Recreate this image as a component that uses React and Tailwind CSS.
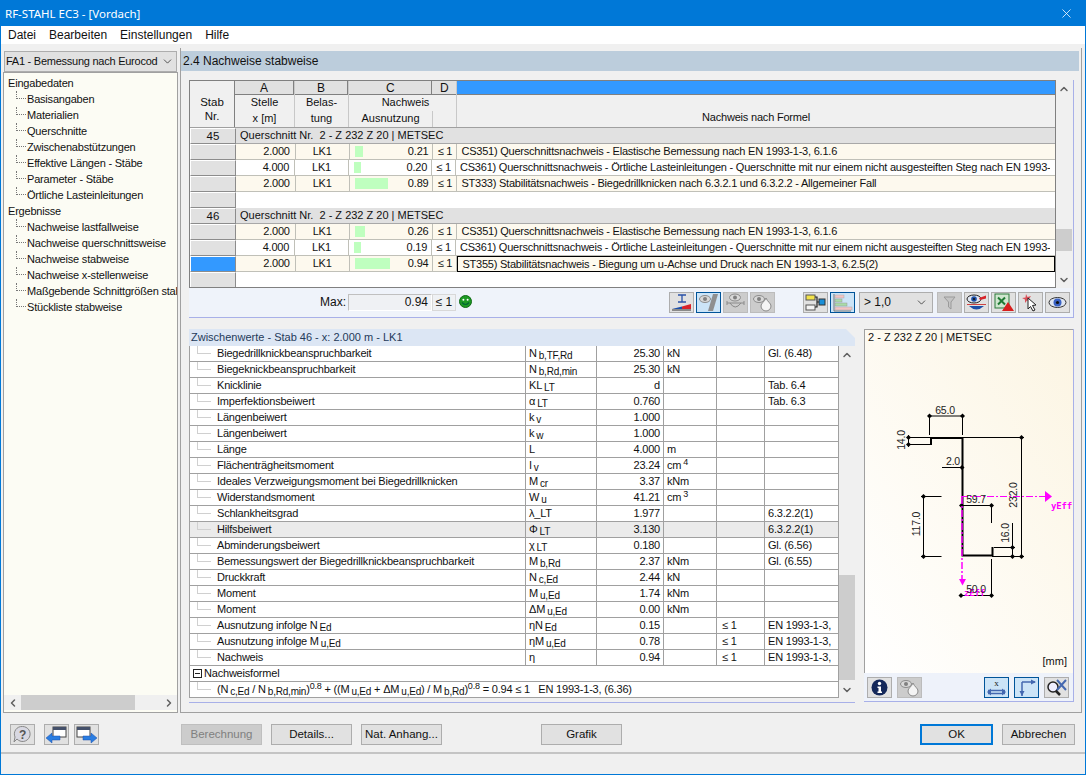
import React from "react";
import { X, ChevronDown, ChevronUp, ChevronLeft, ChevronRight } from "lucide-react";

const treeInput = ["Basisangaben", "Materialien", "Querschnitte", "Zwischenabstützungen", "Effektive Längen - Stäbe", "Parameter - Stäbe", "Örtliche Lasteinleitungen"];
const treeResult = ["Nachweise lastfallweise", "Nachweise querschnittsweise", "Nachweise stabweise", "Nachweise x-stellenweise", "Maßgebende Schnittgrößen stabweise", "Stückliste stabweise"];

const cs351 = "CS351) Querschnittsnachweis - Elastische Bemessung nach EN 1993-1-3, 6.1.6";
const cs361 = "CS361) Querschnittsnachweis - Örtliche Lasteinleitungen - Querschnitte mit nur einem nicht ausgesteiften Steg nach EN 1993-1-3, 6.1.7";

const groups = [
  {
    nr: "45",
    rows: [
      { x: "2.000", val: 0.21, text: cs351 },
      { x: "4.000", val: 0.2, text: cs361 },
      { x: "2.000", val: 0.89, text: "ST333) Stabilitätsnachweis - Biegedrillknicken nach 6.3.2.1 und 6.3.2.2 - Allgemeiner Fall" },
    ],
  },
  {
    nr: "46",
    rows: [
      { x: "2.000", val: 0.26, text: cs351 },
      { x: "4.000", val: 0.19, text: cs361 },
      { x: "2.000", val: 0.94, text: "ST355) Stabilitätsnachweis - Biegung um u-Achse und Druck nach EN 1993-1-3, 6.2.5(2)", active: true },
    ],
  },
];

const S = ({ b, s, p }) => (
  <span>
    {b}
    {s && <sub className="ml-[2px] text-[10px] [bottom:-1.5px]">{s}</sub>}
    {p && <sup className="ml-[2px] text-[9px]">{p}</sup>}
  </span>
);

const values = [
  ["Biegedrillknickbeanspruchbarkeit", <S b="N" s="b,TF,Rd" />, "25.30", "kN", "", "Gl. (6.48)"],
  ["Biegeknickbeanspruchbarkeit", <S b="N" s="b,Rd,min" />, "25.30", "kN", "", ""],
  ["Knicklinie", <S b="KL" s="LT" />, "d", "", "", "Tab. 6.4"],
  ["Imperfektionsbeiwert", <S b="α" s="LT" />, "0.760", "", "", "Tab. 6.3"],
  ["Längenbeiwert", <S b="k" s="v" />, "1.000", "", "", ""],
  ["Längenbeiwert", <S b="k" s="w" />, "1.000", "", "", ""],
  ["Länge", "L", "4.000", "m", "", ""],
  ["Flächenträgheitsmoment", <S b="I" s="v" />, "23.24", <S b="cm" p="4" />, "", ""],
  ["Ideales Verzweigungsmoment bei Biegedrillknicken", <S b="M" s="cr" />, "3.37", "kNm", "", ""],
  ["Widerstandsmoment", <S b="W" s="u" />, "41.21", <S b="cm" p="3" />, "", ""],
  ["Schlankheitsgrad", <S b="λ_LT" />, "1.977", "", "", "6.3.2.2(1)"],
  ["Hilfsbeiwert", <S b="Φ" s="LT" />, "3.130", "", "", "6.3.2.2(1)"],
  ["Abminderungsbeiwert", <S b="χ" s="LT" />, "0.180", "", "", "Gl. (6.56)"],
  ["Bemessungswert der Biegedrillknickbeanspruchbarkeit", <S b="M" s="b,Rd" />, "2.37", "kNm", "", "Gl. (6.55)"],
  ["Druckkraft", <S b="N" s="c,Ed" />, "2.44", "kN", "", ""],
  ["Moment", <S b="M" s="u,Ed" />, "1.74", "kNm", "", ""],
  ["Moment", <S b="ΔM" s="u,Ed" />, "0.00", "kNm", "", ""],
  [<S b="Ausnutzung infolge N" s="Ed" />, <S b="ηN" s="Ed" />, "0.15", "", "≤ 1", "EN 1993-1-3,"],
  [<S b="Ausnutzung infolge M" s="u,Ed" />, <S b="ηM" s="u,Ed" />, "0.78", "", "≤ 1", "EN 1993-1-3,"],
  ["Nachweis", "η", "0.94", "", "≤ 1", "EN 1993-1-3,"],
];

function IconBtn({ mode, children }) {
  const cls =
    mode === "on"
      ? "bg-[#cce4f7] border-[#005499]"
      : mode === "off"
      ? "bg-[#cccccc] border-[#bcbcbc]"
      : "bg-[#e1e1e1] border-[#adadad]";
  return (
    <div className={`w-[25px] h-[21px] border flex items-center justify-center shrink-0 ${cls}`}>
      <svg width="23" height="19" viewBox="0 0 23 19">{children}</svg>
    </div>
  );
}

const GreyEye = ({ x = 8, y = 6 }) => (
  <g>
    <ellipse cx={x} cy={y} rx="5.5" ry="3.5" fill="#d8d8d8" stroke="#8c8c8c" />
    <circle cx={x} cy={y} r="2" fill="#808080" />
  </g>
);
const Drop = ({ x = 14 }) => (
  <path d={`M${x} 5 C${x + 1.5} 9 ${x + 5} 10 ${x + 5} 13 A5 5 0 0 1 ${x - 5} 13 C${x - 5} 10 ${x - 1.5} 9 ${x} 5Z`} fill="#f4f4f4" stroke="#8a8a8a" />
);

const ScrollV = ({ className, thumb }) => (
  <div className={`flex flex-col items-center bg-[#f0f0f0] ${className}`}>
    <ChevronUp size={12} strokeWidth={3} className="text-[#606060] mt-[3px] shrink-0" />
    <div className="flex-1 w-full">{thumb}</div>
    <ChevronDown size={12} strokeWidth={3} className="text-[#606060] mb-[2px] shrink-0" />
  </div>
);

const Dot = ({ x, y }) => <path d={`M${x - 2.5} ${y} L${x} ${y - 2.5} L${x + 2.5} ${y} L${x} ${y + 2.5}Z`} fill="#000" />;
const DimText = ({ x, y, rot, children }) => (
  <text x={x} y={y} fontSize="10.5" fill="#222" textAnchor="middle" transform={rot ? `rotate(-90 ${x} ${y})` : undefined} fontFamily="'Liberation Sans', sans-serif">
    {children}
  </text>
);

function Section() {
  const lines = [
    [929.5, 416, 962.5, 416], [929.5, 416, 929.5, 435], [962.5, 416, 962.5, 435],
    [907, 437.5, 930, 437.5], [907, 444.5, 930, 444.5], [908.5, 435, 908.5, 447],
    [942, 467.5, 962, 467.5],
    [1021.5, 437.5, 1021.5, 557], [962, 437.5, 1024, 437.5], [992, 556.5, 1024, 556.5],
    [923.5, 496.5, 923.5, 556.5], [921, 496.5, 941.5, 496.5], [921, 556.5, 941.5, 556.5],
    [961, 505.5, 992, 505.5], [991.5, 505, 991.5, 523],
    [1012.5, 523, 1012.5, 557], [994, 547.5, 1015, 547.5],
    [961, 595.5, 992, 595.5], [991.5, 559, 991.5, 596],
  ];
  const dots = [
    [929.5, 416], [962.5, 416], [908.5, 437.5], [908.5, 444.5], [962, 467.5], [1021.5, 437.5], [1021.5, 556.5],
    [923.5, 496.5], [923.5, 556.5], [961.5, 505.5], [991.5, 505.5], [1012.5, 547.5], [1012.5, 556.5], [961, 595.5], [991.5, 595.5],
  ];
  return (
    <svg className="block" width="208" height="310" viewBox="865 347 208 310">
      {lines.map((l, i) => (
        <line key={i} x1={l[0]} y1={l[1]} x2={l[2]} y2={l[3]} stroke="#000" strokeWidth="1" />
      ))}
      {dots.map((d, i) => (
        <Dot key={i} x={d[0]} y={d[1]} />
      ))}
      <path d="M931 445 V438 H962.5 V555.5 H992.5 V547" fill="none" stroke="#000" strokeWidth="2" />
      <line x1="961" y1="496.5" x2="1046" y2="496.5" stroke="#ff00ff" strokeWidth="1" strokeDasharray="7 2 2 2" />
      <path d="M1045 491 L1052 496.5 L1045 502Z" fill="#ff00ff" />
      <line x1="962" y1="497" x2="962" y2="580" stroke="#ff00ff" strokeWidth="1.5" strokeDasharray="7 2 2 2" />
      <path d="M959 579 H966 L962.5 585.5Z" fill="#ff00ff" />
      <DimText x={945} y={414}>65.0</DimText>
      <DimText x={905} y={440} rot>14.0</DimText>
      <DimText x={953} y={465}>2.0</DimText>
      <DimText x={1017} y={495} rot>232.0</DimText>
      <DimText x={920} y={524} rot>117.0</DimText>
      <DimText x={976} y={503}>59.7</DimText>
      <DimText x={1009} y={533} rot>16.0</DimText>
      <text x="964" y="596" fontSize="9" fontWeight="bold" fill="#ff00ff" fontFamily="'DejaVu Sans Mono', monospace">zEff</text>
      <DimText x={976} y={593}>50.0</DimText>
      <text x="1051" y="509" fontSize="9" fontWeight="bold" fill="#ff00ff" fontFamily="'DejaVu Sans Mono', monospace">yEff</text>
    </svg>
  );
}

const Btn = ({ children, className = "" }) => (
  <div className={`h-[21px] w-[81px] border border-[#adadad] bg-[#e1e1e1] flex items-center justify-center text-[11.5px] tracking-normal whitespace-nowrap text-[#111] shrink-0 ${className}`}>
    {children}
  </div>
);

function ResultRow({ row, odd }) {
  const bg = odd ? "bg-[#fdf9ee]" : "bg-white";
  return (
    <div className="flex h-4">
      <div className={`w-[46px] border border-[#8c8c8c] border-t-white border-l-white ${row.active ? "bg-[#3399ff]" : "bg-[#e1e1e1]"}`} />
      <div className={`w-[60px] ${bg} border-b border-r border-[#c0c0b8] text-right pr-[5px]`}>{row.x}</div>
      <div className={`w-[54px] ${bg} border-b border-r border-[#c0c0b8] text-center`}>LK1</div>
      <div className={`w-[84px] ${bg} border-b border-r border-[#c0c0b8] flex items-center justify-between pl-[5px] pr-[4px]`}>
        <div className="h-[11px] bg-[#bfffbf]" style={{ width: `${Math.round(row.val * 37)}px` }} />
        <span>{row.val.toFixed(2)}</span>
      </div>
      <div className={`w-[24px] ${bg} border-b border-r border-[#c0c0b8] text-center`}>≤ 1</div>
      <div className={`w-[599px] ${bg} pl-[4px] pr-[5px] ${row.active ? "border border-black pl-[3px] leading-[14px]" : "border-b border-[#c0c0b8]"}`}>
        <div className="overflow-hidden whitespace-nowrap tracking-[-0.22px]">{row.text}</div>
      </div>
    </div>
  );
}

export default function App() {
  return (
    <div className="w-[1086px] h-[775px] flex flex-col bg-[#f0f0f0] border border-[#0078d7] overflow-hidden text-[11px] tracking-[-0.2px] leading-[15px] text-[#111] font-['Liberation_Sans',Arial,sans-serif]">
      {/* title bar */}
      <div className="h-[25px] shrink-0 bg-[#0078d7] text-white text-[11.5px] tracking-normal flex items-center justify-between pl-[4px] pr-[11px] font-['Noto_Sans',sans-serif]">
        <span>RF-STAHL EC3 - [Vordach]</span>
        <X size={15} strokeWidth={1.25} />
      </div>
      <div className="h-[18px] shrink-0 bg-white flex items-center pl-[7px] gap-[13px] text-[12px] tracking-normal">
        <span>Datei</span>
        <span>Bearbeiten</span>
        <span>Einstellungen</span>
        <span>Hilfe</span>
      </div>

      {/* main */}
      <div className="h-[669px] shrink-0 flex pt-[7px] pl-[2px]">
        {/* left navigator */}
        <div className="w-[175px] shrink-0 flex flex-col">
          <div className="h-[21px] ml-[1px] w-[173px] bg-[#e1e1e1] border border-[#adadad] flex items-center justify-between pl-[1px] pr-[2px] text-[11px] tracking-[-0.25px] overflow-hidden">
            <span className="whitespace-nowrap">FA1 - Bemessung nach Eurocod</span>
            <ChevronDown size={13} strokeWidth={1.25} className="shrink-0" />
          </div>
          <div className="flex-1 flex flex-col bg-[#fcfcf4] border border-[#a0a0a0] overflow-hidden">
            <div className="flex-1 pt-[2px] pl-[4px] leading-4">
              <div className="h-4">Eingabedaten</div>
              <TreeList items={treeInput} />
              <div className="h-4">Ergebnisse</div>
              <TreeList items={treeResult} />
            </div>
            <div className="h-[15px] mb-[2px] flex items-center justify-between bg-[#f0f0f0]">
              <ChevronLeft size={12} strokeWidth={3} className="text-[#606060] ml-[3px] shrink-0" />
              <div className="flex-1 h-full ml-[2px]">
                <div className="h-full w-[114px] bg-[#cdcdcd]" />
              </div>
              <ChevronRight size={12} strokeWidth={3} className="text-[#606060] mr-[2px] shrink-0" />
            </div>
          </div>
        </div>

        {/* right content */}
        <div className="w-[902px] shrink-0 ml-[2px] -mt-[3px] flex flex-col border border-t-0 border-[#a0a0a0] pt-[3px]">
          <div className="h-[20px] shrink-0 bg-[#bccddc] mr-[2px] pl-[2px] flex items-center text-[12px] tracking-normal">2.4 Nachweise stabweise</div>

          {/* upper table */}
          <div className="mt-[9px] ml-[8px] flex w-[885px] h-[208px] shrink-0 border-r border-[#a8b0e8]">
            <div className="w-[867px] border border-[#808080] bg-white overflow-hidden">
              <div className="flex h-[47px] bg-[#f0f0f0] border-b border-[#a0a0a0]">
                <div className="w-[45px] text-center pt-[14px] text-[11.5px] tracking-normal leading-[14px] border-r border-[#808080]">
                  Stab<br />Nr.
                </div>
                <HeadCol w="w-[60px]" l="A" a="Stelle" b="x [m]" />
                <HeadCol w="w-[54px]" l="B" a="Belas-" b="tung" />
                <div className="w-[108px] flex flex-col border-r border-[#c8c8c8]">
                  <div className="flex h-[14px]">
                    <div className="w-[84px] bg-[#e1e1e1] border-b border-r border-[#808080] text-center leading-[14px] text-[12px]">C</div>
                    <div className="w-[24px] bg-[#e1e1e1] border-b border-[#808080] text-center leading-[14px] text-[12px]">D</div>
                  </div>
                  <div className="text-center h-4 pl-[6px] leading-[15px] tracking-normal">Nachweis</div>
                  <div className="flex flex-1">
                    <div className="w-[84px] text-center border-r border-[#c8c8c8] leading-[15px] tracking-normal">Ausnutzung</div>
                  </div>
                </div>
                <div className="flex-1 flex flex-col">
                  <div className="h-[14px] bg-[#3399ff] border-b border-[#808080]" />
                  <div className="flex-1 flex items-end justify-center pb-[2px]">Nachweis nach Formel</div>
                </div>
              </div>
              {groups.map((g) => (
                <div key={g.nr}>
                  <div className="flex h-4">
                    <div className="w-[46px] bg-[#e1e1e1] border border-[#8c8c8c] border-t-white border-l-white text-center text-[11.5px] tracking-normal">{g.nr}</div>
                    <div className="flex-1 bg-[#e1e1e1] border-b border-[#a8a8a8] pl-[4px] tracking-normal">Querschnitt Nr.&nbsp; 2 - Z 232 Z 20 | METSEC</div>
                  </div>
                  {g.rows.map((r, j) => (
                    <ResultRow key={j} row={r} odd={j % 2 === 0} />
                  ))}
                  <div className="flex h-4">
                    <div className="w-[46px] bg-[#e1e1e1] border border-[#8c8c8c] border-t-white border-l-white" />
                  </div>
                </div>
              ))}
            </div>
            <ScrollV className="w-[16px]" thumb={<div className="h-[22px] mt-[134px] bg-[#cdcdcd]" />} />
          </div>

          {/* toolbar */}
          <div className="ml-[8px] w-[885px] h-[30px] shrink-0 bg-[#eff3fa] border-r border-b border-[#a8b0e8] flex items-center">
            <span className="ml-[131px] w-[28px] text-[12px] tracking-normal">Max:</span>
            <div className="w-[84px] h-[17px] bg-[#eff1f4] border border-[#c0c0c0] border-b-white border-r-white text-right pr-[3px] text-[12px] tracking-normal leading-[15px]">0.94</div>
            <div className="w-[24px] h-[17px] bg-[#eff1f4] border border-[#d8d8d8] text-center text-[12px] tracking-normal leading-[15px]">≤ 1</div>
            <svg className="ml-[3px] mb-[2px]" width="13" height="13" viewBox="0 0 13 13">
              <circle cx="6.5" cy="6.5" r="6" fill="#1d9a24" stroke="#0f6a14" />
              <circle cx="4.4" cy="4.8" r="1" fill="#fff" />
              <circle cx="8.6" cy="4.8" r="1" fill="#fff" />
              <path d="M3 7.5 Q6.5 11.5 10 7.5" fill="none" stroke="#063" strokeWidth="1.2" />
            </svg>
            <div className="ml-[197px] flex gap-[2px]">
              <IconBtn>
                <path d="M8 2H16M12 2V9M8 9H16" stroke="#2a52a8" strokeWidth="1.3" fill="none" />
                <path d="M2 16 L12 13.5 V16Z" fill="#1c4fa8" />
                <path d="M12 13.5 L21 11 V16 H12Z" fill="#d8232a" />
                <path d="M2 17 H21" stroke="#333" />
              </IconBtn>
              <IconBtn mode="on">
                <GreyEye />
                <path d="M11 18 L16 1 H21 L16 18Z" fill="#8f8f8f" />
              </IconBtn>
              <IconBtn mode="off">
                <GreyEye x={11} y={4.5} />
                <path d="M3 10 H20 M3 8 V12 M20 8 V12 M6 10 Q11 18 17 10" fill="none" stroke="#8a8a8a" />
              </IconBtn>
              <IconBtn mode="off">
                <GreyEye />
                <Drop x={15} />
              </IconBtn>
            </div>
            <div className="ml-[28px] flex gap-[2px]">
              <IconBtn>
                <rect x="2" y="2" width="9" height="5" fill="#f2e24a" stroke="#555" />
                <rect x="2" y="12" width="9" height="5" fill="#f4f4f4" stroke="#555" />
                <rect x="15" y="6" width="6" height="6" fill="#1a8fd8" stroke="#333" />
                <path d="M11 4 H13 V14 H11 M13 9 H15" fill="none" stroke="#222" strokeWidth="1.2" />
              </IconBtn>
              <IconBtn mode="on">
                <path d="M3 1 V18 H20" stroke="#777" fill="none" />
                <rect x="4" y="2" width="9" height="3" fill="#f2c4c4" stroke="#aaa" strokeWidth="0.5" />
                <rect x="4" y="6" width="7" height="3" fill="#a8dca8" stroke="#999" strokeWidth="0.5" />
                <rect x="4" y="10" width="12" height="3" fill="#a8dca8" stroke="#999" strokeWidth="0.5" />
                <rect x="4" y="14" width="17" height="3" fill="#f2c4c4" stroke="#aaa" strokeWidth="0.5" />
              </IconBtn>
            </div>
            <div className="ml-[4px] w-[74px] h-[21px] border border-[#adadad] bg-[#e1e1e1] flex items-center justify-between pl-[4px] pr-[4px] text-[12px] tracking-normal">
              <span>&gt; 1,0</span>
              <ChevronDown size={13} strokeWidth={1.25} />
            </div>
            <div className="ml-[4px] flex gap-[2px]">
              <IconBtn mode="off">
                <path d="M6 4 H17 L13 9 V16 L10.5 14 V9Z" fill="#c4c4c4" stroke="#9a9a9a" />
              </IconBtn>
              <IconBtn>
                <ellipse cx="9" cy="6" rx="7" ry="4" fill="#dfe6f2" stroke="#222" />
                <circle cx="9" cy="6" r="2.8" fill="#1c4fa8" />
                <circle cx="9" cy="6" r="1.1" fill="#111" />
                <path d="M14 5 L21 2.5 V5.5 L15 7Z" fill="#d8232a" />
                <path d="M2 11 H21 V12 H2Z" fill="#c44" />
                <path d="M4 13 Q11.5 20 19 13Z" fill="#1c4fa8" />
              </IconBtn>
              <IconBtn>
                <rect x="3" y="1" width="14" height="14" fill="#cfe6cf" stroke="#2a7a3a" />
                <path d="M6 4.5 L13 11.5 M13 4.5 L6 11.5" stroke="#1f7a34" strokeWidth="2" />
                <path d="M16 9 L22 18 H10Z" fill="#d81e1e" />
              </IconBtn>
              <IconBtn>
                <path d="M7 1 L8.5 4 L12 3 L10 6 L12 8 L8 7.5 L6 10 L6 6.5 L3 5 L6.5 4.5Z" fill="#d8505a" />
                <path d="M9 5 L9 16 L11.5 13.5 L14 18 L16 17 L13.5 12.5 L17 12Z" fill="#fff" stroke="#222" />
              </IconBtn>
              <IconBtn>
                <ellipse cx="11.5" cy="9.5" rx="8.5" ry="5" fill="#dfe6f2" stroke="#333" />
                <circle cx="11.5" cy="9.5" r="4" fill="#3a62c4" />
                <circle cx="11.5" cy="9.5" r="1.6" fill="#111" />
              </IconBtn>
            </div>
          </div>

          {/* lower part */}
          <div className="mt-[11px] ml-[8px] flex flex-1 min-h-0 gap-[9px]">
            <div className="w-[666px] flex flex-col">
              <div className="h-[17px] shrink-0 bg-[#dce6f4] pl-[2px] tracking-normal text-[#243a5a] leading-[16px] [clip-path:polygon(0_0,calc(100%-9px)_0,100%_9px,100%_100%,0_100%)]">
                Zwischenwerte - Stab 46 - x: 2.000 m - LK1
              </div>
              <div className="flex h-[352px] shrink-0">
                <div className="w-[650px] border border-t-0 border-[#a0a0a0] bg-white overflow-hidden">
                  <div className="grid grid-cols-[336px_71px_67px_53px_48px_73px] auto-rows-[16px]">
                    {values.map((v, i) => {
                      const rowBg = i === 11 ? "bg-[#ebebeb]" : "bg-white";
                      return (
                        <React.Fragment key={i}>
                          <div className={`${rowBg} border-b border-r border-[#a0a0a0] flex`}>
                            <div className="ml-[7px] w-[14px] h-[8px] border-l border-b border-[#d0d0d0] shrink-0" />
                            <div className="ml-[6px] whitespace-nowrap">{v[0]}</div>
                          </div>
                          <div className={`${rowBg} border-b border-r border-[#a0a0a0] pl-[3px] whitespace-nowrap`}>{v[1]}</div>
                          <div className={`${rowBg} border-b border-r border-[#a0a0a0] text-right pr-[3px]`}>{v[2]}</div>
                          <div className={`${rowBg} border-b border-r border-[#a0a0a0] pl-[3px]`}>{v[3]}</div>
                          <div className={`${rowBg} border-b border-r border-[#a0a0a0] pl-[5px]`}>{v[4]}</div>
                          <div className={`${rowBg} border-b border-[#a0a0a0] pl-[3px] whitespace-nowrap overflow-hidden`}>{v[5]}</div>
                        </React.Fragment>
                      );
                    })}
                  </div>
                  <div className="h-4 border-b border-[#a0a0a0] flex items-center pl-[3px]">
                    <div className="w-[9px] h-[9px] border border-[#222] flex items-center justify-center shrink-0">
                      <div className="w-[5px] h-px bg-[#222]" />
                    </div>
                    <span className="ml-[2px]">Nachweisformel</span>
                  </div>
                  <div className="h-4 flex whitespace-nowrap border-b border-[#a0a0a0]">
                    <div className="ml-[7px] w-[14px] h-[8px] border-l border-b border-[#d0d0d0] shrink-0" />
                    <div className="ml-[6px]">
                      (<S b="N" s="c,Ed" /> / <S b="N" s="b,Rd,min" />)<sup className="text-[9px]">0.8</sup> + ((<S b="M" s="u,Ed" /> + <S b="ΔM" s="u,Ed" />) / <S b="M" s="b,Rd" />)<sup className="text-[9px]">0.8</sup> = 0.94 ≤ 1 &nbsp; EN 1993-1-3, (6.36)
                    </div>
                  </div>
                </div>
                <ScrollV className="w-[16px]" thumb={<div className="h-[105px] mt-[214px] bg-[#cdcdcd]" />} />
              </div>
              <div className="mt-[4px] border-t border-[#a8b0e8]" />
            </div>

            {/* section preview */}
            <div className="w-[210px] h-[373px] shrink-0 flex flex-col border-r border-b border-[#a8b0e8]">
              <div className="flex-1 flex flex-col bg-linear-to-bl from-[#fcf5e3] to-white border border-b-0 border-r-0 border-[#a0a0a0]">
                <div className="h-[17px] pl-[3px] tracking-normal">2 - Z 232 Z 20 | METSEC</div>
                <Section />
                <div className="text-right pr-[6px] -mt-[3px] tracking-normal">[mm]</div>
              </div>
              <div className="h-[28px] shrink-0 bg-[#eef2fa] flex items-center pl-[3px]">
                <IconBtn>
                  <circle cx="11.5" cy="9.5" r="8" fill="#14285a" />
                  <circle cx="11.5" cy="5.5" r="1.7" fill="#fff" />
                  <path d="M9.5 8.5 H13 V13.5 H14 V15 H9.5 V13.5 H10.5 V10 H9.5Z" fill="#fff" />
                </IconBtn>
                <div className="ml-[5px]">
                  <IconBtn mode="off">
                    <GreyEye />
                    <Drop x={15} />
                  </IconBtn>
                </div>
                <div className="ml-[62px]">
                  <IconBtn mode="on">
                    <path d="M3 12.5 H20 M3 15.5 H20" stroke="#4468b0" strokeWidth="1.5" />
                    <path d="M2 14 L6 10.5 V17.5Z M21 14 L17 10.5 V17.5Z" fill="#4468b0" />
                    <text x="11.5" y="8" fontSize="9" textAnchor="middle" fill="#222" fontFamily="'Liberation Serif', serif">x</text>
                  </IconBtn>
                </div>
                <div className="ml-[5px]">
                  <IconBtn mode="on">
                    <path d="M7 4 H20 M7 4 V18" stroke="#4468b0" strokeWidth="1.5" fill="none" />
                    <path d="M21 4 L16 1.5 V6.5Z M7 18 L4.5 13 H9.5Z" fill="#4468b0" />
                  </IconBtn>
                </div>
                <div className="ml-[5px]">
                  <IconBtn>
                    <circle cx="8" cy="9" r="5" fill="#eef" stroke="#222" strokeWidth="1.5" />
                    <path d="M11 13 L15 17" stroke="#222" strokeWidth="2.5" />
                    <path d="M12 2 L21 12 M21 2 L12 12" stroke="#4468b0" strokeWidth="2" />
                  </IconBtn>
                </div>
              </div>
            </div>
          </div>
        </div>
      </div>

      {/* buttons */}
      <div className="h-[39px] shrink-0 flex items-center pl-[9px] pt-[3px]">
        <IconBtn>
          <path d="M11.5 1.5 A7.5 7.5 0 1 1 6 14 L3 17 L4 12 A7.5 7.5 0 0 1 11.5 1.5Z" fill="#d8d8e2" stroke="#888" />
          <text x="11.5" y="13.5" fontSize="12" fontWeight="bold" textAnchor="middle" fill="#555" fontFamily="'Liberation Sans', sans-serif">?</text>
        </IconBtn>
        <div className="ml-[9px]">
          <IconBtn>
            <rect x="8" y="2" width="13" height="10" fill="#fff" stroke="#444" />
            <rect x="8" y="2" width="13" height="3" fill="#44506a" />
            <path d="M1 13 L7 8 V11 H15 V15 H7 V18Z" fill="#2a7de1" stroke="#1c4fa8" strokeWidth="0.5" />
          </IconBtn>
        </div>
        <div className="ml-[5px]">
          <IconBtn>
            <rect x="2" y="2" width="13" height="10" fill="#fff" stroke="#444" />
            <rect x="2" y="2" width="13" height="3" fill="#44506a" />
            <path d="M22 13 L16 8 V11 H8 V15 H16 V18Z" fill="#2a7de1" stroke="#1c4fa8" strokeWidth="0.5" />
          </IconBtn>
        </div>
        <Btn className="ml-[82px] !bg-[#cccccc] !border-[#bfbfbf] !text-[#808080]">Berechnung</Btn>
        <Btn className="ml-[9px]">Details...</Btn>
        <Btn className="ml-[9px]">Nat. Anhang...</Btn>
        <Btn className="ml-[99px]">Grafik</Btn>
        <Btn className="ml-[298px] !w-[73px] !border-2 !border-[#0078d7]">OK</Btn>
        <Btn className="ml-[9px] !w-[73px]">Abbrechen</Btn>
      </div>
      <div className="flex-1 border-t-2 border-[#c4c4c4]" />
    </div>
  );
}

function TreeList({ items }) {
  return (
    <div className="ml-[8px]">
      {items.map((t) => (
        <div key={t} className="flex h-4 whitespace-nowrap">
          <div className="w-[10px] shrink-0 h-[8px] border-b border-l border-dotted border-[#777]" />
          <span className="ml-[1px]">{t}</span>
        </div>
      ))}
    </div>
  );
}

function HeadCol({ w, l, a, b }) {
  return (
    <div className={`${w} flex flex-col text-center border-r border-[#c8c8c8] tracking-normal`}>
      <div className="h-[14px] bg-[#e1e1e1] border-b border-r border-[#808080] leading-[14px] text-[12px]">{l}</div>
      <div className="h-4 leading-[15px]">{a}</div>
      <div className="h-4 leading-[15px]">{b}</div>
    </div>
  );
}
